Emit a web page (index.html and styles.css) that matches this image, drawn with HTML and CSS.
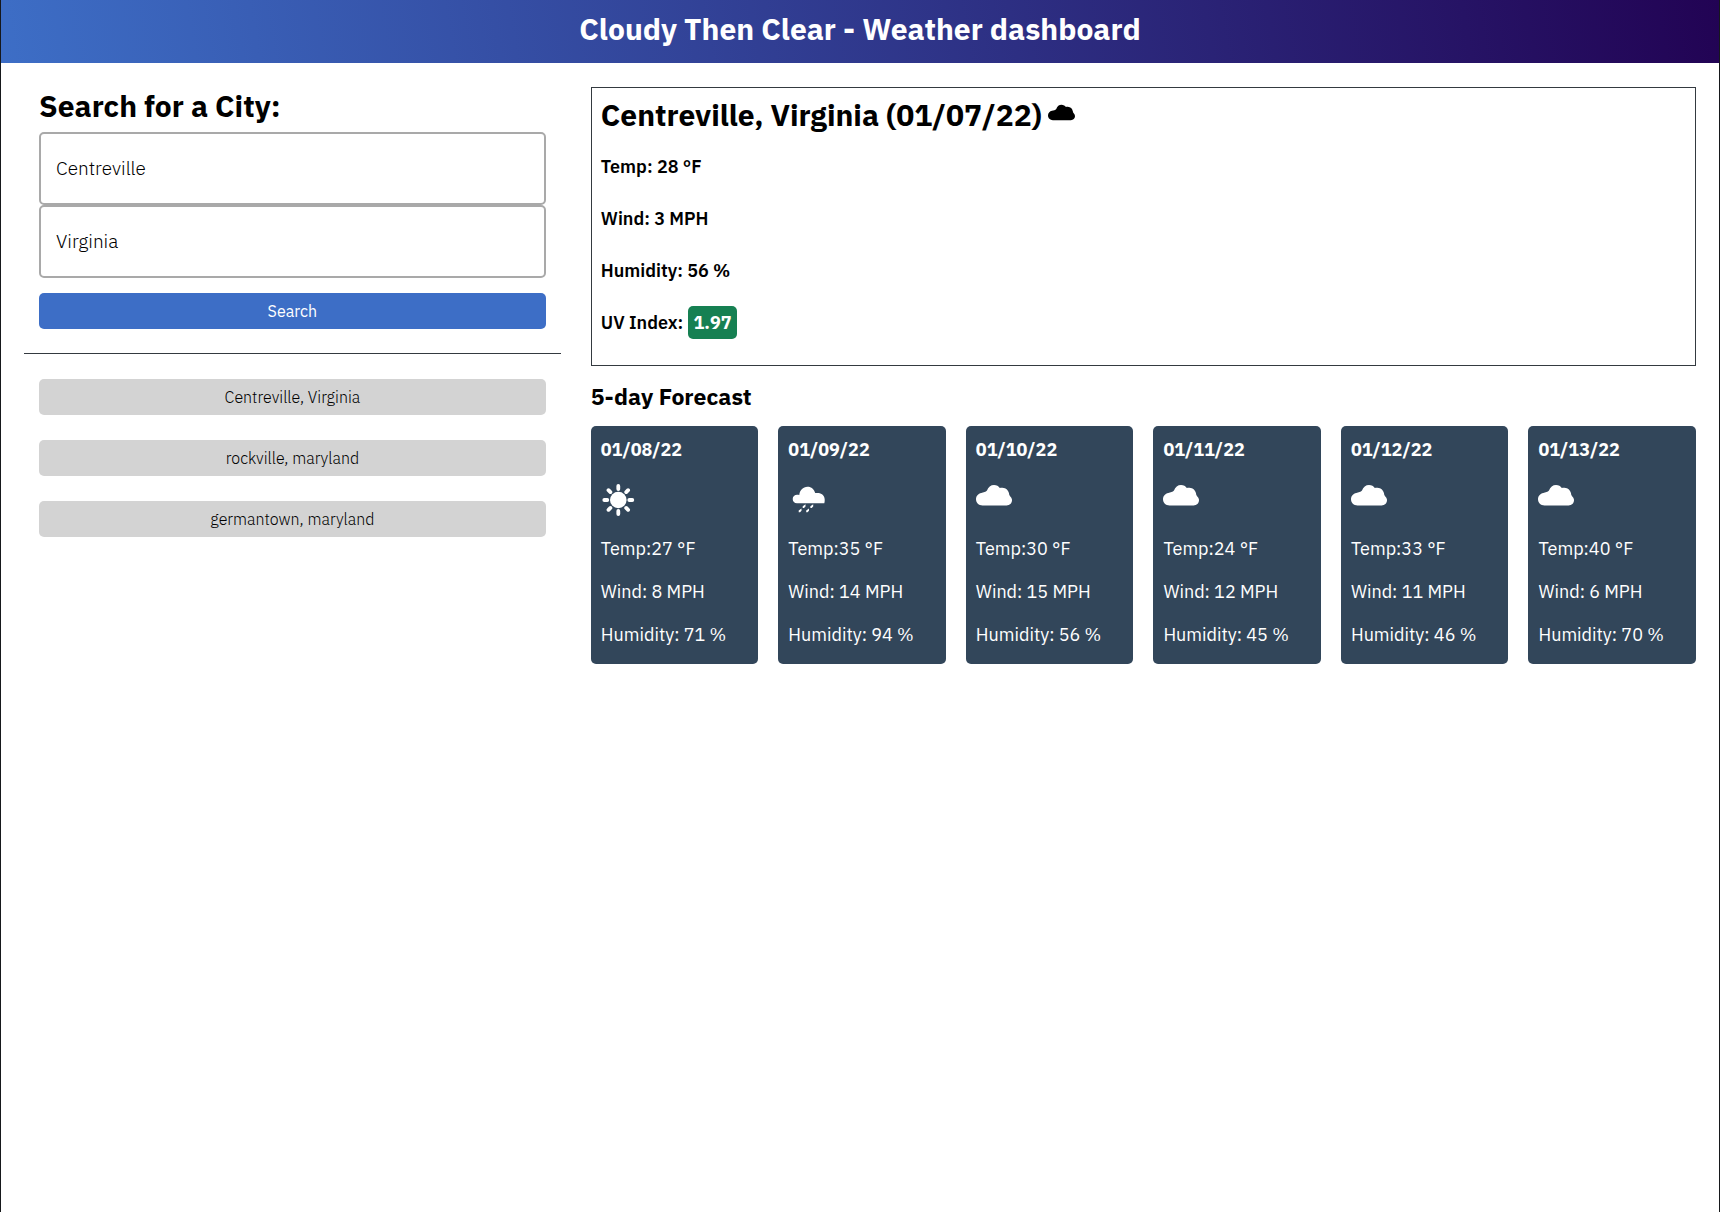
FILE: index.html
```html
<!DOCTYPE html>
<html lang="en">
<head>
  <meta charset="utf-8">
  <meta name="viewport" content="width=device-width, initial-scale=1">
  <title>Cloudy Then Clear - Weather dashboard</title>
  <link rel="stylesheet" href="styles.css">
</head>
<body>
  <svg class="sprite" aria-hidden="true">
    <symbol id="cloud" viewBox="0 0 36 28">
      <path d="M6.500 21.500C2.800 21.500 0 18.800 0 15.300C0 11.900 2.200 9.600 5.300 8.900C7.500 8.700 9.800 8 11 6.600C12.200 3 14.800 1 18 1c2.600 0 4.600 1.200 5.800 3.100c1-.3 1.800-.4 2.600-.3c3.600.2 6.200 2.600 6.700 6c.1 1.300.6 2 1.400 2.900c1 1 1.500 2.200 1.500 3.600c0 3-2.400 5.200-5.400 5.200z"/>
    </symbol>
    <symbol id="sun" viewBox="0 0 36 32">
      <circle cx="17.300" cy="16" r="8.300"/>
      <path fill="none" stroke="currentColor" stroke-width="3.800" stroke-linecap="round" d="M17.300 5V2M17.300 27v3M6.300 16h-3M28.300 16h3M9.400 8.100L7.500 6.200M25.200 8.100l1.900-1.900M9.400 23.900l-1.900 1.900M25.200 23.900l1.900 1.900"/>
    </symbol>
    <symbol id="rain" viewBox="-1 0 37 32">
      <path d="M8 19.300c-2.600 0-4.300-1.700-4.300-4.200c0-2.600 1.900-4.400 4.400-4.400c.8 0 1.500.1 2.200.4C10.500 6.300 14 2.700 18.500 2.700c4 0 6.700 2.600 7.700 6.300c1.100-.1 2.200-.1 3.300 0c3.500.3 6.200 3 6.200 6.500c0 1.500 0 2.500-.4 3.800z"/>
      <path d="M16.500 20.300v2.200l-1.500 1.500h-1.300v-1.700zM24.200 20.300v2.200l-1.500 1.500h-1.300v-1.700zM12.500 24.500v2.200l-1.500 1.500H9.700v-1.700zM20 24.500v2.200l-1.500 1.500h-1.300v-1.700z"/>
    </symbol>
  </svg>

  <header class="page-header">
    <h1 class="page-title">Cloudy Then Clear - Weather dashboard</h1>
  </header>

  <main class="dashboard">
    <aside class="sidebar">
      <form class="search" onsubmit="return false">
        <h2 class="search-title">Search for a City:</h2>
        <input class="search-input" type="text" aria-label="City" value="Centreville">
        <input class="search-input" type="text" aria-label="State" value="Virginia">
        <button class="button button-primary" type="submit">Search</button>
      </form>
      <div class="history">
        <button class="button" type="button">Centreville, Virginia</button>
        <button class="button" type="button">rockville, maryland</button>
        <button class="button" type="button">germantown, maryland</button>
      </div>
    </aside>

    <div class="weather">
      <section class="current">
        <h2 class="current-title">Centreville, Virginia (01/07/22) <svg class="icon-small" aria-hidden="true"><use href="#cloud"/></svg></h2>
        <p>Temp: 28 °F</p>
        <p>Wind: 3 MPH</p>
        <p>Humidity: 56 %</p>
        <p>UV Index: <span class="uv">1.97</span></p>
      </section>

      <h3 class="forecast-title">5-day Forecast</h3>
      <section class="forecast">
        <article class="card">
          <h4>01/08/22</h4>
          <svg class="icon" aria-hidden="true"><use href="#sun"/></svg>
          <p>Temp:27 °F</p><p>Wind: 8 MPH</p><p>Humidity: 71 %</p>
        </article>
        <article class="card">
          <h4>01/09/22</h4>
          <svg class="icon icon-rain" aria-hidden="true"><use href="#rain"/></svg>
          <p>Temp:35 °F</p><p>Wind: 14 MPH</p><p>Humidity: 94 %</p>
        </article>
        <article class="card">
          <h4>01/10/22</h4>
          <svg class="icon icon-cloud" aria-hidden="true"><use href="#cloud"/></svg>
          <p>Temp:30 °F</p><p>Wind: 15 MPH</p><p>Humidity: 56 %</p>
        </article>
        <article class="card">
          <h4>01/11/22</h4>
          <svg class="icon icon-cloud" aria-hidden="true"><use href="#cloud"/></svg>
          <p>Temp:24 °F</p><p>Wind: 12 MPH</p><p>Humidity: 45 %</p>
        </article>
        <article class="card">
          <h4>01/12/22</h4>
          <svg class="icon icon-cloud" aria-hidden="true"><use href="#cloud"/></svg>
          <p>Temp:33 °F</p><p>Wind: 11 MPH</p><p>Humidity: 46 %</p>
        </article>
        <article class="card">
          <h4>01/13/22</h4>
          <svg class="icon icon-cloud" aria-hidden="true"><use href="#cloud"/></svg>
          <p>Temp:40 °F</p><p>Wind: 6 MPH</p><p>Humidity: 70 %</p>
        </article>
      </section>
    </div>
  </main>
</body>
</html>
```
FILE: styles.css
```css
* {
  box-sizing: border-box;
  margin: 0;
}

body {
  min-height: 100vh;
  border: solid #16181b;
  border-width: 0 1px;
  background: #fff;
  color: #000;
  font-family: "IBM Plex Sans", "Open Sans", sans-serif;
  font-size: 18px;
  line-height: 24px;
}

.sprite {
  display: none;
}

.page-header {
  padding: 9px 24px 15px;
  background: linear-gradient(80deg, #3d6ec6, #220354);
  color: #fff;
  text-align: center;
}

.page-title {
  font-size: 30px;
  font-weight: 700;
  line-height: 39px;
}

.dashboard {
  display: grid;
  grid-template-columns: 34fr 70fr;
  gap: 30px;
  align-items: start;
  padding: 24px 23px;
}

.search {
  display: flex;
  flex-direction: column;
  padding: 0 15px 24px;
  border-bottom: 1px solid #343a40;
}

.search-title {
  margin-bottom: 8px;
  font-size: 30px;
  font-weight: 700;
  line-height: 37px;
}

.search-input {
  width: 100%;
  height: 73px;
  padding: 0 15px 2px;
  border: 2px solid #a9a9a9;
  border-radius: 5px;
  background: #fff;
  color: #000;
  font: 300 19px "IBM Plex Sans", "Open Sans", sans-serif;
}

.history {
  display: flex;
  flex-direction: column;
  gap: 25px;
  padding: 25px 15px;
}

.button {
  height: 36px;
  border: 0;
  border-radius: 5px;
  background: #d3d3d3;
  color: #000;
  font: 300 16px "IBM Plex Sans", "Open Sans", sans-serif;
}

.button-primary {
  margin-top: 15px;
  background: #3d6ec6;
  color: #fff;
  font-weight: 400;
}

.current {
  display: grid;
  gap: 28px;
  padding: 7px 9px 30px;
  border: 1px solid #343a40;
  font-weight: 600;
}

.current-title {
  display: flex;
  align-items: center;
  gap: 6px;
  margin-bottom: -7px;
  font-size: 30px;
  font-weight: 700;
  line-height: 39px;
}

.icon-small {
  width: 27px;
  height: 21px;
}

.uv {
  padding: 5px 6px;
  border-radius: 5px;
  background: #168052;
  color: #fff;
  font-weight: 700;
}

.forecast-title {
  margin: 15px 0;
  font-size: 23px;
  font-weight: 700;
  line-height: 30px;
}

.forecast {
  display: grid;
  grid-template-columns: repeat(6, 1fr);
  gap: 20px;
}

.card {
  display: flex;
  flex-direction: column;
  gap: 19px;
  padding: 12px 10px 17px;
  border-radius: 5px;
  background: #32465a;
  color: #fff;
}

.card h4 {
  font-size: 18px;
  font-weight: 700;
}

.icon {
  width: 36px;
  height: 32px;
  margin: 3px 0 2px;
}

.icon-rain {
  width: 37px;
}

.icon-cloud {
  height: 28px;
  margin-bottom: 6px;
}

.icon,
.icon-small {
  fill: currentColor;
}
```
